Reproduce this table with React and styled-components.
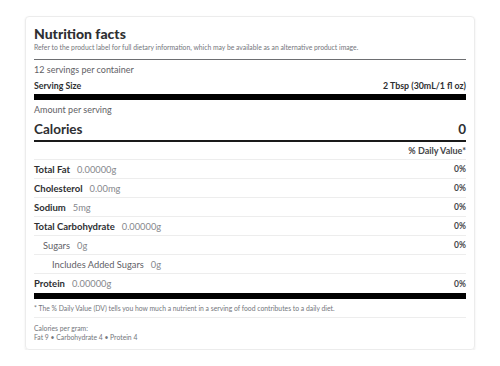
import React from "react";
import styled, { createGlobalStyle } from "styled-components";

const Global = createGlobalStyle`
  html, body { margin: 0; padding: 0; background: #fff; }
  body { font-family: Lato, "Open Sans", sans-serif; color: #2e2f32; }
`;

const Page = styled.div`
  padding: 16px 25px 0 25px;
`;

const Card = styled.section`
  box-sizing: border-box;
  width: 450px;
  border: 1px solid #ececec;
  border-radius: 4px;
  box-shadow: 0 1px 2px rgba(0, 0, 0, 0.1);
  padding: 8px 8px 8px 8px;
`;

const Title = styled.h2`
  margin: 0;
  font-size: 14px;
  line-height: 17px;
  font-weight: 900;
  color: #2e2f32;
`;

const Disclaimer = styled.p`
  margin: 0;
  font-size: 6.8px;
  line-height: 10px;
  color: #74767c;
  padding-bottom: 7px;
  border-bottom: 1px solid #6d6e71;
`;

const Line = styled.div`
  display: flex;
  justify-content: space-between;
  align-items: center;
  box-sizing: border-box;
  height: ${(p) => p.$h || 19}px;
  padding-left: ${(p) => p.$indent || 0}px;
  font-size: ${(p) => p.$size || 9.3}px;
  color: #5f6166;
  border-bottom: ${(p) => p.$border || "none"};
`;

const Bold = styled.span`
  font-weight: 700;
  font-size: ${(p) => p.$size || 9.5}px;
  color: #2e2f32;
`;

const Value = styled.span`
  color: #85878c;
  margin-left: 7px;
`;

const Pct = styled.span`
  font-weight: 700;
  font-size: ${(p) => p.$size || 8.5}px;
  color: #46474a;
`;

const ThickBar = styled.div`
  height: 6px;
  background: #000;
  margin-top: ${(p) => p.$mt || 0}px;
`;

const Footnote = styled.div`
  display: flex;
  align-items: center;
  height: 19px;
  box-sizing: border-box;
  font-size: 6.8px;
  color: #74767c;
  border-bottom: 1px solid #ededed;
`;

const PerGram = styled.div`
  padding-top: 6px;
  font-size: 6.8px;
  line-height: 8.5px;
  color: #74767c;
`;

const Plain = styled.span`
  color: #5f6166;
`;

const light = "1px solid #ededed";

const nutrients = [
  { name: "Total Fat", value: "0.00000g", pct: "0%" },
  { name: "Cholesterol", value: "0.00mg", pct: "0%" },
  { name: "Sodium", value: "5mg", pct: "0%" },
  { name: "Total Carbohydrate", value: "0.00000g", pct: "0%" },
  { name: "Sugars", value: "0g", pct: "0%", indent: 9, plain: true },
  { name: "Includes Added Sugars", value: "0g", pct: "", indent: 18, plain: true },
  { name: "Protein", value: "0.00000g", pct: "0%", last: true },
];

export default function App() {
  return (
    <>
      <Global />
      <Page>
        <Card>
          <Title>Nutrition facts</Title>
          <Disclaimer>
            Refer to the product label for full dietary information, which may be available as an alternative product image.
          </Disclaimer>
          <Line $h={18} $size={9}>12 servings per container</Line>
          <Line $h={15}>
            <Bold $size={8.8}>Serving Size</Bold>
            <Bold $size={8.8}>2 Tbsp (30mL/1 fl oz)</Bold>
          </Line>
          <ThickBar $mt={1} />
          <Line $h={18} $size={9}>Amount per serving</Line>
          <Line $h={24} $border="2px solid #1a1a1a">
            <Bold $size={13.5}>Calories</Bold>
            <Bold $size={13.5}>0</Bold>
          </Line>
          <Line $h={18} $border={light}>
            <span />
            <Pct $size={9}>% Daily Value*</Pct>
          </Line>
          {nutrients.map((n) => (
            <Line key={n.name} $indent={n.indent} $border={n.last ? "none" : light}>
              <span>
                {n.plain ? <Plain>{n.name}</Plain> : <Bold>{n.name}</Bold>}
                <Value>{n.value}</Value>
              </span>
              <Pct>{n.pct}</Pct>
            </Line>
          ))}
          <ThickBar />
          <Footnote>
            * The % Daily Value (DV) tells you how much a nutrient in a serving of food contributes to a daily diet.
          </Footnote>
          <PerGram>
            Calories per gram:
            <br />
            Fat 9 • Carbohydrate 4 • Protein 4
          </PerGram>
        </Card>
      </Page>
    </>
  );
}
